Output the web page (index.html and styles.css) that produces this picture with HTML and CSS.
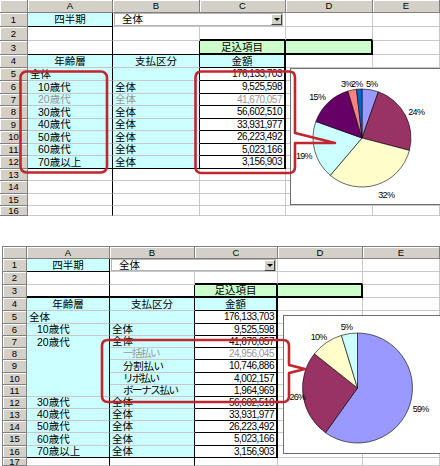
FILE: index.html
```html
<!DOCTYPE html>
<html lang="ja">
<head>
<meta charset="utf-8">
<title>Excel pie callouts</title>
<link rel="stylesheet" href="styles.css">
</head>
<body>
<div class="sheet s1">
  <div class="h"></div><div class="h">A</div><div class="h">B</div><div class="h">C</div><div class="h">D</div><div class="h">E</div>

  <div class="h">1</div>
  <div class="c cy ctr kR kB">四半期</div>
  <div class="c span2 combo-cell"><div class="combo"><span class="combo-text">全体</span><span class="combo-btn"><span class="tri"></span></span></div></div>
  <div class="c"></div><div class="c"></div>

  <div class="h">2</div><div class="c kR"></div><div class="c"></div><div class="c kB2"></div><div class="c kB2"></div><div class="c"></div>

  <div class="h">3</div><div class="c kR kB"></div><div class="c kR kB"></div><div class="c gr ctr kR2 kB2">足込項目</div><div class="c gr kR2 kB2"></div><div class="c"></div>

  <div class="h">4</div><div class="c cy ctr kR">年齢層</div><div class="c cy ctr kR">支払区分</div><div class="c cy ctr kR2 kB">金額</div><div class="c"></div><div class="c"></div>

  <div class="h">5</div><div class="c cy kR">全体</div><div class="c cy kR"></div><div class="c num kR2 kB">176,133,703</div><div class="c"></div><div class="c"></div>
  <div class="h">6</div><div class="c cy kR ind">10歳代</div><div class="c cy kR">全体</div><div class="c num kR2 kB">9,525,598</div><div class="c"></div><div class="c"></div>
  <div class="h">7</div><div class="c cy kR ind dim">20歳代</div><div class="c cy kR dim">全体</div><div class="c num kR2 kB dim">41,670,057</div><div class="c"></div><div class="c"></div>
  <div class="h">8</div><div class="c cy kR ind">30歳代</div><div class="c cy kR">全体</div><div class="c num kR2 kB">56,602,510</div><div class="c"></div><div class="c"></div>
  <div class="h">9</div><div class="c cy kR ind">40歳代</div><div class="c cy kR">全体</div><div class="c num kR2 kB">33,931,977</div><div class="c"></div><div class="c"></div>
  <div class="h">10</div><div class="c cy kR ind">50歳代</div><div class="c cy kR">全体</div><div class="c num kR2 kB">26,223,492</div><div class="c"></div><div class="c"></div>
  <div class="h">11</div><div class="c cy kR ind">60歳代</div><div class="c cy kR">全体</div><div class="c num kR2 kB">5,023,166</div><div class="c"></div><div class="c"></div>
  <div class="h">12</div><div class="c cy kR kB ind">70歳以上</div><div class="c cy kR kB">全体</div><div class="c num kR2 kB">3,156,903</div><div class="c"></div><div class="c"></div>
  <div class="h">13</div><div class="c kR"></div><div class="c"></div><div class="c"></div><div class="c"></div><div class="c"></div>
  <div class="h">14</div><div class="c kR"></div><div class="c"></div><div class="c"></div><div class="c"></div><div class="c"></div>
  <div class="h">15</div><div class="c kR"></div><div class="c"></div><div class="c"></div><div class="c"></div><div class="c"></div>
  <div class="h">16</div><div class="c kR"></div><div class="c"></div><div class="c"></div><div class="c"></div><div class="c"></div>

  <div class="chart chart1">
    <svg width="160" height="140" viewBox="0 0 160 140">
      <g class="slices">
        <path fill="#9999ff" d="M72 70 L72 21 A49 49 0 0 1 88.33 23.80 Z"/>
        <path fill="#993366" d="M72 70 L88.33 23.80 A49 49 0 0 1 119.41 82.38 Z"/>
        <path fill="#ffffcc" d="M72 70 L119.41 82.38 A49 49 0 0 1 40.29 107.36 Z"/>
        <path fill="#ccffff" d="M72 70 L40.29 107.36 A49 49 0 0 1 25.86 53.50 Z"/>
        <path fill="#660066" d="M72 70 L25.86 53.50 A49 49 0 0 1 57.90 23.07 Z"/>
        <path fill="#ff8080" d="M72 70 L57.90 23.07 A49 49 0 0 1 66.50 21.31 Z"/>
        <path fill="#0066cc" d="M72 70 L66.50 21.31 A49 49 0 0 1 72 21 Z"/>
      </g>
      <g class="lbl">
        <text x="76" y="18.5">5%</text>
        <text x="51" y="18.5">3%</text>
        <text x="61" y="18.5">2%</text>
        <text x="19.3" y="32">15%</text>
        <text x="118.3" y="47">24%</text>
        <text x="6" y="91">19%</text>
        <text x="88.3" y="130.2">32%</text>
      </g>
    </svg>
  </div>
</div>

<div class="sheet s2">
  <div class="h"></div><div class="h">A</div><div class="h">B</div><div class="h">C</div><div class="h">D</div><div class="h">E</div>

  <div class="h">1</div>
  <div class="c cy ctr kR kB">四半期</div>
  <div class="c span2 combo-cell"><div class="combo"><span class="combo-text">全体</span><span class="combo-btn"><span class="tri"></span></span></div></div>
  <div class="c"></div><div class="c"></div>

  <div class="h">2</div><div class="c kR"></div><div class="c"></div><div class="c kB2"></div><div class="c kB2"></div><div class="c"></div>

  <div class="h">3</div><div class="c kR kB2"></div><div class="c kR kB2"></div><div class="c gr ctr kR2 kB2">足込項目</div><div class="c gr kR2 kB2"></div><div class="c"></div>

  <div class="h">4</div><div class="c cy ctr kR">年齢層</div><div class="c cy ctr kR">支払区分</div><div class="c cy ctr kR2 kB">金額</div><div class="c"></div><div class="c"></div>

  <div class="h">5</div><div class="c cy kR">全体</div><div class="c cy kR"></div><div class="c num kR2 kB">176,133,703</div><div class="c"></div><div class="c"></div>
  <div class="h">6</div><div class="c cy kR ind">10歳代</div><div class="c cy kR">全体</div><div class="c num kR2 kB">9,525,598</div><div class="c"></div><div class="c"></div>
  <div class="h">7</div><div class="c cy kR ind merged">20歳代</div><div class="c cy kR">全体</div><div class="c num kR2 kB">41,670,057</div><div class="c"></div><div class="c"></div>
  <div class="h">8</div><div class="c cy kR ind2 dim t1">一括払い</div><div class="c num kR2 kB dim">24,956,045</div><div class="c"></div><div class="c"></div>
  <div class="h">9</div><div class="c cy kR ind2 t2">分割払い</div><div class="c num kR2 kB">10,746,886</div><div class="c"></div><div class="c"></div>
  <div class="h">10</div><div class="c cy kR ind2 t3">リボ払い</div><div class="c num kR2 kB">4,002,157</div><div class="c"></div><div class="c"></div>
  <div class="h">11</div><div class="c cy kR ind2 t4">ボーナス払い</div><div class="c num kR2 kB">1,964,969</div><div class="c"></div><div class="c"></div>
  <div class="h">12</div><div class="c cy kR ind">30歳代</div><div class="c cy kR">全体</div><div class="c num kR2 kB">56,602,510</div><div class="c"></div><div class="c"></div>
  <div class="h">13</div><div class="c cy kR ind">40歳代</div><div class="c cy kR">全体</div><div class="c num kR2 kB">33,931,977</div><div class="c"></div><div class="c"></div>
  <div class="h">14</div><div class="c cy kR ind">50歳代</div><div class="c cy kR">全体</div><div class="c num kR2 kB">26,223,492</div><div class="c"></div><div class="c"></div>
  <div class="h">15</div><div class="c cy kR ind">60歳代</div><div class="c cy kR">全体</div><div class="c num kR2 kB">5,023,166</div><div class="c"></div><div class="c"></div>
  <div class="h">16</div><div class="c cy kR kB ind">70歳以上</div><div class="c cy kR kB">全体</div><div class="c num kR2 kB">3,156,903</div><div class="c"></div><div class="c"></div>
  <div class="h">17</div><div class="c kR"></div><div class="c kR"></div><div class="c"></div><div class="c"></div><div class="c"></div>

  <div class="chart chart2">
    <svg width="160" height="142" viewBox="0 0 160 142">
      <g class="slices">
        <path fill="#9999ff" d="M74.5 73 L74.5 18 A55 55 0 1 1 42.48 117.72 Z"/>
        <path fill="#993366" d="M74.5 73 L42.48 117.72 A55 55 0 0 1 31.41 38.81 Z"/>
        <path fill="#ffffcc" d="M74.5 73 L31.41 38.81 A55 55 0 0 1 58.45 20.40 Z"/>
        <path fill="#ccffff" d="M74.5 73 L58.45 20.40 A55 55 0 0 1 74.5 18 Z"/>
      </g>
      <g class="lbl">
        <text x="57.7" y="15">5%</text>
        <text x="27.7" y="25">10%</text>
        <text x="6.5" y="85">26%</text>
        <text x="129.7" y="96.5">59%</text>
      </g>
    </svg>
  </div>
</div>

<svg class="callouts" width="440" height="466" viewBox="0 0 440 466">
  <rect x="20.5" y="71.5" width="86.5" height="101" rx="6" ry="6"/>
  <path d="M201.5 71.5 H289 Q295 71.5 295 77.5 V133 L335 143 L295 143 V167 Q295 173 289 173 H201.5 Q195.5 173 195.5 167 V77.5 Q195.5 71.5 201.5 71.5 Z"/>
  <path d="M108 340 H283 Q289 340 289 346 V365 L305 369 L289 373 V396 Q289 402 283 402 H108 Q102 402 102 396 V346 Q102 340 108 340 Z"/>
</svg>
</body>
</html>
```

FILE: styles.css
```css
html, body {
  margin: 0;
  padding: 0;
  width: 440px;
  height: 466px;
  overflow: hidden;
  background: #ffffff;
}

body {
  position: relative;
  font-family: "Liberation Sans", "Noto Sans CJK JP", sans-serif;
  color: #000;
}

.sheet {
  display: grid;
  position: relative;
  overflow: hidden;
  background: #fff;
}

.s1 {
  width: 440px;
  grid-template-columns: 28px 85px 87px 86px 87px 67px;
  grid-template-rows: 13px 14px 14px 14px 13px 13px 13px 12px 13px 12px 13px 12px 13px 12px 13px 12px 10px;
}

.s2 {
  width: 437px;
  margin: 30px 0 0 2px;
  border-top: 1px solid #808080;
  border-left: 1px solid #808080;
  grid-template-columns: 24px 83px 85px 83px 85px 77px;
  grid-template-rows: 12px 13px 13px 13px 13px 13px 12px 12px 12px 13px 12px 12px 12px 12px 12px 13px 12px 8px;
}

.h {
  box-sizing: border-box;
  background: #d4d0c8;
  border-right: 1px solid #808080;
  border-bottom: 1px solid #808080;
  box-shadow: inset 1px 1px 0 #ffffff;
  display: flex;
  align-items: center;
  justify-content: center;
  font-family: "Liberation Sans", sans-serif;
  font-size: 9.5px;
  line-height: 1;
  color: #000;
  overflow: hidden;
}

.c {
  box-sizing: border-box;
  border-right: 1px solid #c8c8c8;
  border-bottom: 1px solid #c8c8c8;
  display: flex;
  align-items: center;
  padding: 0 2px;
  white-space: nowrap;
  overflow: hidden;
  font-family: "Liberation Sans", "Noto Sans CJK JP", sans-serif;
  font-size: 10.5px;
  line-height: 1;
}

.cy { background: #ccffff; }
.gr { background: #ccffcc; }
.ctr { justify-content: center; }
.dim { color: #969696; }
.ind { padding-left: 10px; }
.ind2 { padding-left: 13px; }

.kR { border-right-color: #000; }
.kB { border-bottom-color: #000; }
.kR2 { border-right: 2px solid #000; }
.kB2 { border-bottom: 2px solid #000; }

.num {
  justify-content: flex-end;
  font-family: "Liberation Sans", sans-serif;
  font-size: 10px;
  letter-spacing: -0.5px;
  padding-right: 2px;
}

.merged {
  grid-row: span 5;
  align-items: flex-start;
  padding-top: 1px;
}

.t1 { letter-spacing: -1.5px; }
.t2 { letter-spacing: -0.3px; }
.t3 { letter-spacing: -1.7px; }
.t4 { letter-spacing: -1.4px; }

.span2 { grid-column: span 2; }

.combo-cell {
  padding: 0 2px 0 1px;
  align-items: stretch;
  background: #fff;
}

.s2 .combo-cell { padding: 0 1px 0 1px; }

.combo {
  flex: 1;
  display: flex;
  align-items: center;
  justify-content: space-between;
  box-sizing: border-box;
  border: 1px solid #b4b4b4;
  background: #fff;
}

.combo-text {
  padding-left: 7px;
  font-size: 10.5px;
}

.combo-btn {
  box-sizing: border-box;
  width: 11px;
  height: 11px;
  background: #d4d0c8;
  border-top: 1px solid #ffffff;
  border-left: 1px solid #ffffff;
  border-right: 1px solid #404040;
  border-bottom: 1px solid #404040;
  display: flex;
  align-items: center;
  justify-content: center;
}

.tri {
  width: 0;
  height: 0;
  border-left: 3px solid transparent;
  border-right: 3px solid transparent;
  border-top: 3px solid #000;
}

.chart {
  position: absolute;
  box-sizing: border-box;
  background: #fff;
  border: 1px solid #6e6e6e;
  z-index: 2;
}

.chart svg {
  display: block;
  margin: -1px 0 0 -1px;
}

.chart1 {
  left: 290px;
  top: 68px;
  width: 170px;
  height: 137px;
}

.chart2 {
  left: 280px;
  top: 68px;
  width: 170px;
  height: 139px;
}

.slices path {
  stroke: #000;
  stroke-width: 0.6;
  stroke-linejoin: round;
}

.lbl text {
  font-family: "Liberation Sans", sans-serif;
  font-size: 9px;
  letter-spacing: -0.7px;
  fill: #000;
}

.callouts {
  position: absolute;
  left: 0;
  top: 0;
  z-index: 5;
  pointer-events: none;
}

.callouts rect,
.callouts path {
  fill: none;
  stroke: #c1262e;
  stroke-width: 2.6;
  stroke-linejoin: round;
}
```
